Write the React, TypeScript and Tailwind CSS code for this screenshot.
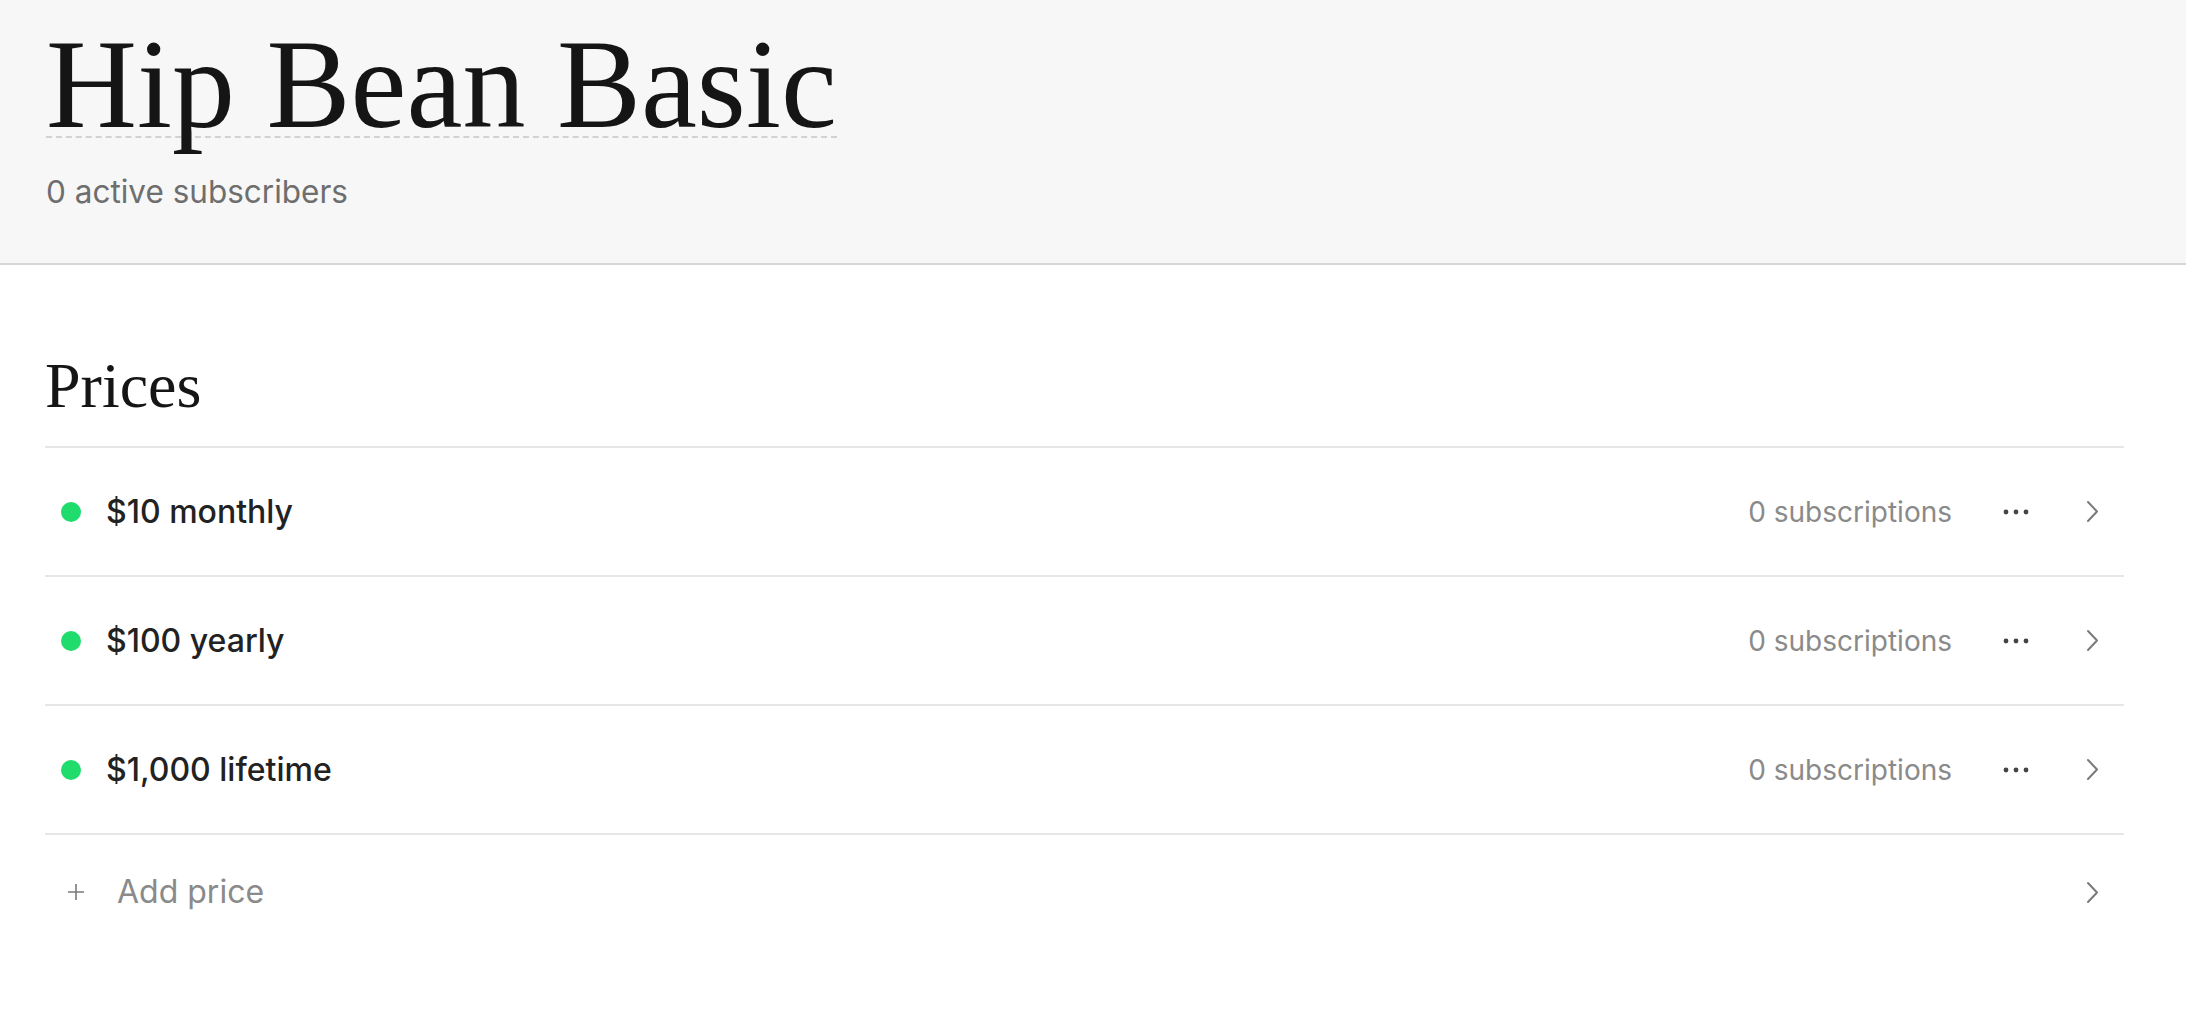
import React from 'react';

const prices = [
  { label: '$10 monthly', subs: '0 subscriptions' },
  { label: '$100 yearly', subs: '0 subscriptions' },
  { label: '$1,000 lifetime', subs: '0 subscriptions' },
];

function Chevron() {
  return (
    <svg width="13" height="23" viewBox="0 0 13 23" fill="none" className="shrink-0">
      <path d="M2 2 L11 11.5 L2 21" stroke="#7a7a7a" strokeWidth="2" strokeLinecap="round" strokeLinejoin="round" />
    </svg>
  );
}

function Dots() {
  return (
    <svg width="26" height="8" viewBox="0 0 26 8" className="shrink-0">
      <circle cx="3" cy="4" r="2.4" fill="#444" />
      <circle cx="13" cy="4" r="2.4" fill="#444" />
      <circle cx="23" cy="4" r="2.4" fill="#444" />
    </svg>
  );
}

export default function App() {
  return (
    <div className="min-h-screen bg-white font-['Inter',sans-serif]">
      <div className="bg-[#f7f7f7] border-b-2 border-[#d6d6d6] pl-[46px] pt-[33px] pb-[51px]">
        <h1 className="inline-block font-['Liberation_Serif',serif] text-[126px] leading-[103px] text-[#151515] border-b-2 border-dashed border-[#d2d2d2]">
          Hip Bean Basic
        </h1>
        <div className="mt-[34px] text-[31.5px] leading-[40px] text-[#6e6e6e]">0 active subscribers</div>
      </div>

      <div className="pl-[45px] pr-[62px]">
        <h2 className="mt-[89px] pb-[28px] font-['Liberation_Serif',serif] text-[64px] leading-none text-[#151515]">
          Prices
        </h2>
        <div className="border-t-2 border-[#e6e6e6]">
          {prices.map((p) => (
            <div key={p.label} className="h-[129px] border-b-2 border-[#e6e6e6] flex items-center pl-[16px] pr-[25px]">
              <span className="w-[20px] h-[20px] rounded-full bg-[#1fdc6c] shrink-0" />
              <span className="ml-[25px] text-[32px] font-medium text-[#222]">{p.label}</span>
              <span className="ml-auto text-[28px] text-[#8a8a8a]">{p.subs}</span>
              <span className="ml-[51px]">
                <Dots />
              </span>
              <span className="ml-[57px]">
                <Chevron />
              </span>
            </div>
          ))}
          <div className="h-[114px] flex items-center pl-[22px] pr-[25px]">
            <svg width="18" height="18" viewBox="0 0 18 18" className="shrink-0">
              <path d="M9 1 V17 M1 9 H17" stroke="#7a7a7a" strokeWidth="1.6" />
            </svg>
            <span className="ml-[32px] text-[32px] text-[#8a8a8a]">Add price</span>
            <span className="ml-auto">
              <Chevron />
            </span>
          </div>
        </div>
      </div>
    </div>
  );
}
